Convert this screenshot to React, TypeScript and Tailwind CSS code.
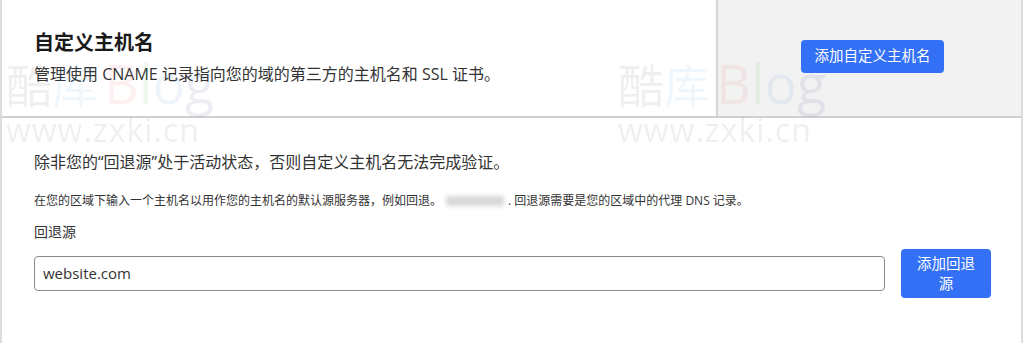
import React from "react";

const font = { fontFamily: '"Open Sans", "Noto Sans CJK SC", sans-serif' };

function Watermark({ className }: { className: string }) {
  return (
    <div className={`pointer-events-none absolute select-none ${className}`}>
      <div className="flex items-end leading-none text-[46px]" style={font}>
        <span className="text-[#000] opacity-[0.06]">酷</span>
        <span className="text-[#3aa0e0] opacity-[0.07]">库</span>
        <span className="ml-[6px] text-[#e05a50] opacity-[0.08] text-[54px] leading-[50px]">B</span>
        <span className="text-[#4caf50] opacity-[0.08] text-[54px] leading-[50px]">l</span>
        <span className="text-[#3b82c4] opacity-[0.08] text-[54px] leading-[50px]">o</span>
        <span className="text-[#2a3a80] opacity-[0.08] text-[54px] leading-[50px]">g</span>
      </div>
      <div className="mt-[6px] text-[32px] leading-none tracking-[1px] text-[#000] opacity-[0.06]" style={font}>
        www.zxki.cn
      </div>
    </div>
  );
}

export default function App() {
  return (
    <div className="relative h-[343px] w-[1024px] overflow-hidden bg-white" style={font}>
      <div className="flex h-[343px] w-[1023px] flex-col border-x-2 border-[#dcdcdc]">
        <div className="flex h-[118px] border-b-2 border-[#d0d0d0]">
          <div className="flex-1 pl-[32px] pt-[30px]">
            <h1 className="text-[20px] font-bold leading-[26px] text-[#1a1a1a]">自定义主机名</h1>
            <p className="mt-[7px] text-[16px] leading-[22px] text-[#333]">
              管理使用 CNAME 记录指向您的域的第三方的主机名和 SSL 证书。
            </p>
          </div>
          <div className="flex w-[305px] items-center justify-center border-l-2 border-[#d4d4d4] bg-[#f2f2f2] pl-[6px] pb-[4px]">
            <button className="h-[33px] w-[143px] rounded-[4px] bg-[#3370f5] text-[14.5px] text-white">
              添加自定义主机名
            </button>
          </div>
        </div>
        <div className="flex-1 pl-[32px] pr-[30px] pt-[33px]">
          <p className="text-[16px] leading-[22px] text-[#333]">
            除非您的“回退源”处于活动状态，否则自定义主机名无法完成验证。
          </p>
          <p className="mt-[19px] flex items-center text-[12px] leading-[18px] text-[#333]">
            在您的区域下输入一个主机名以用作您的主机名的默认源服务器，例如回退。
            <span className="mx-[4px] inline-block h-[10px] w-[58px] bg-[#d8d8d8] blur-[2px]"></span>
            . 回退源需要是您的区域中的代理 DNS 记录。
          </p>
          <div className="mt-[12px] text-[14px] leading-[20px] text-[#333]">回退源</div>
          <div className="mt-[7px] flex items-start">
            <div className="mt-[7px] flex h-[35px] w-[851px] items-center rounded-[4px] border border-[#8a8a8a] px-[8px] text-[15px] text-[#333]">
              website.com
            </div>
            <button className="ml-[16px] h-[49px] w-[90px] rounded-[4px] bg-[#3370f5] px-[12px] text-[14.5px] leading-[20px] text-white">
              添加回退源
            </button>
          </div>
        </div>
      </div>
      <Watermark className="left-[6px] top-[58px]" />
      <Watermark className="left-[618px] top-[58px]" />
    </div>
  );
}
